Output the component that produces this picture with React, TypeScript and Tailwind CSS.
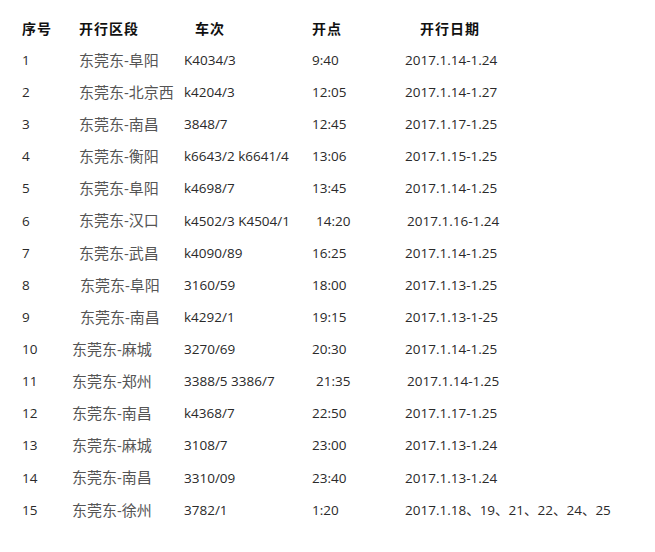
import React from 'react';

type Row = {
  no: string;
  route: string;
  train: string;
  time: string;
  date: string;
  routePad: string;
  timePad: string;
  datePad: string;
};

const rows: Row[] = [
  { no: '1', route: '东莞东-阜阳', train: 'K4034/3', time: '9:40', date: '2017.1.14-1.24', routePad: 'pl-[7px]', timePad: 'pl-0', datePad: 'pl-0' },
  { no: '2', route: '东莞东-北京西', train: 'k4204/3', time: '12:05', date: '2017.1.14-1.27', routePad: 'pl-[7px]', timePad: 'pl-0', datePad: 'pl-0' },
  { no: '3', route: '东莞东-南昌', train: '3848/7', time: '12:45', date: '2017.1.17-1.25', routePad: 'pl-[7px]', timePad: 'pl-0', datePad: 'pl-0' },
  { no: '4', route: '东莞东-衡阳', train: 'k6643/2 k6641/4', time: '13:06', date: '2017.1.15-1.25', routePad: 'pl-[7px]', timePad: 'pl-0', datePad: 'pl-0' },
  { no: '5', route: '东莞东-阜阳', train: 'k4698/7', time: '13:45', date: '2017.1.14-1.25', routePad: 'pl-[7px]', timePad: 'pl-0', datePad: 'pl-0' },
  { no: '6', route: '东莞东-汉口', train: 'k4502/3 K4504/1', time: '14:20', date: '2017.1.16-1.24', routePad: 'pl-[7px]', timePad: 'pl-[4px]', datePad: 'pl-[2px]' },
  { no: '7', route: '东莞东-武昌', train: 'k4090/89', time: '16:25', date: '2017.1.14-1.25', routePad: 'pl-[7px]', timePad: 'pl-0', datePad: 'pl-0' },
  { no: '8', route: '东莞东-阜阳', train: '3160/59', time: '18:00', date: '2017.1.13-1.25', routePad: 'pl-[8px]', timePad: 'pl-0', datePad: 'pl-0' },
  { no: '9', route: '东莞东-南昌', train: 'k4292/1', time: '19:15', date: '2017.1.13-1-25', routePad: 'pl-[8px]', timePad: 'pl-0', datePad: 'pl-0' },
  { no: '10', route: '东莞东-麻城', train: '3270/69', time: '20:30', date: '2017.1.14-1.25', routePad: 'pl-0', timePad: 'pl-0', datePad: 'pl-0' },
  { no: '11', route: '东莞东-郑州', train: '3388/5 3386/7', time: '21:35', date: '2017.1.14-1.25', routePad: 'pl-0', timePad: 'pl-[4px]', datePad: 'pl-[2px]' },
  { no: '12', route: '东莞东-南昌', train: 'k4368/7', time: '22:50', date: '2017.1.17-1.25', routePad: 'pl-0', timePad: 'pl-0', datePad: 'pl-0' },
  { no: '13', route: '东莞东-麻城', train: '3108/7', time: '23:00', date: '2017.1.13-1.24', routePad: 'pl-0', timePad: 'pl-0', datePad: 'pl-0' },
  { no: '14', route: '东莞东-南昌', train: '3310/09', time: '23:40', date: '2017.1.13-1.24', routePad: 'pl-0', timePad: 'pl-0', datePad: 'pl-0' },
  { no: '15', route: '东莞东-徐州', train: '3782/1', time: '1:20', date: '2017.1.18、19、21、22、24、25', routePad: 'pl-0', timePad: 'pl-0', datePad: 'pl-0' },
];

const App: React.FC = () => {
  return (
    <div className="w-[655px] h-[552px] bg-white pt-[12px] pl-[22px] overflow-hidden font-['Open_Sans','Noto_Sans_CJK_SC',sans-serif] text-[13.5px] text-[#2a2a2a]">
      {/* Header */}
      <div className="flex items-center h-[32px] font-bold text-[14px] text-[#111] tracking-[1px]">
        <div className="w-[50px]">序号</div>
        <div className="w-[112px] pl-[7px]">开行区段</div>
        <div className="w-[128px] pl-[11px]">车次</div>
        <div className="w-[93px]">开点</div>
        <div className="pl-[15px]">开行日期</div>
      </div>

      {/* Rows */}
      {rows.map((r) => (
        <div key={r.no} className="flex items-center h-[32.14px] whitespace-nowrap">
          <div className="w-[50px]">{r.no}</div>
          <div className={`w-[112px] text-[15px] text-[#555] ${r.routePad}`}>{r.route}</div>
          <div className="w-[128px]">{r.train}</div>
          <div className={`w-[93px] ${r.timePad}`}>{r.time}</div>
          <div className={r.datePad}>{r.date}</div>
        </div>
      ))}
    </div>
  );
};

export default App;
